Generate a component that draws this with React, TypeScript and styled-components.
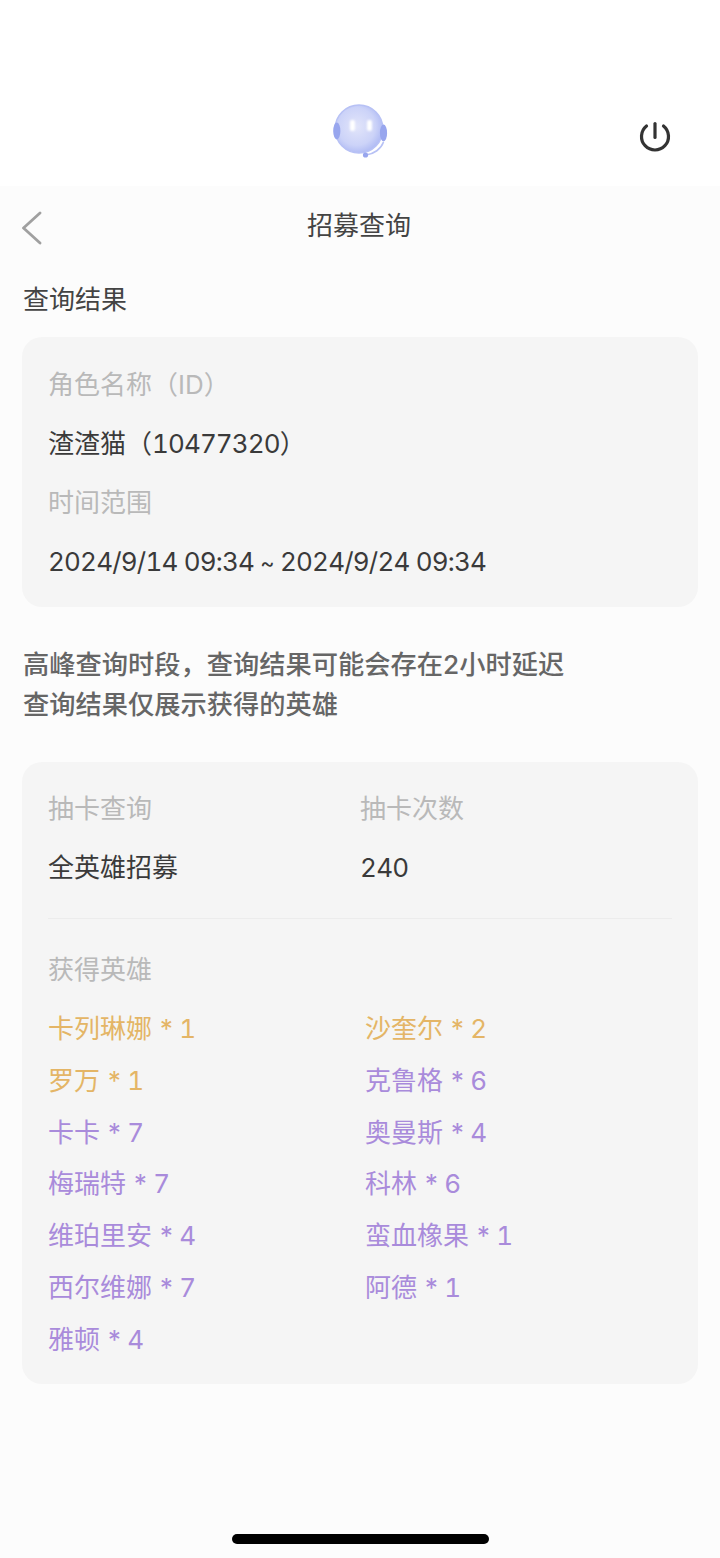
import React from "react";
import styled, { createGlobalStyle } from "styled-components";

const Global = createGlobalStyle`
  html, body { margin: 0; padding: 0; background: #fcfcfc; }
  * { box-sizing: border-box; }
  body {
    font-family: Inter, "Noto Sans CJK SC", sans-serif;
  }
`;

const Page = styled.div`
  width: 720px;
  height: 1558px;
  display: flex;
  flex-direction: column;
  overflow: hidden;
  background: #fcfcfc;
`;

const TopBar = styled.header`
  height: 186px;
  background: #fff;
  display: grid;
  grid-template-columns: 1fr 60px 1fr;
  padding-top: 102px;
  align-items: start;
`;

const Logo = styled.div`
  grid-column: 2;
  display: flex;
  justify-content: center;
`;

const Power = styled.div`
  justify-self: end;
  margin: 16px 49px 0 0;
  display: flex;
`;

const NavBar = styled.div`
  height: 80px;
  display: grid;
  grid-template-columns: 1fr auto 1fr;
  align-items: center;
  padding: 0 24px 0 22px;
`;

const Title = styled.div`
  font-size: 26px;
  line-height: 36px;
  margin-top: -1px;
  color: #444;
`;

const Back = styled.div`
  display: flex;
  margin-top: 4px;
`;

const Content = styled.main`
  padding: 0 22px;
  display: flex;
  flex-direction: column;
`;

const SectionTitle = styled.div`
  font-size: 26px;
  line-height: 36px;
  color: #444;
  margin-top: 16px;
  margin-bottom: 19px;
  padding-left: 1px;
`;

const Card = styled.section`
  background: #f5f5f5;
  border-radius: 20px;
  padding: 30px 26px;
`;

const InfoCard = styled(Card)`
  height: 270px;
  display: flex;
  flex-direction: column;
  gap: 23px;
`;

const Label = styled.div`
  font-size: 26px;
  line-height: 36px;
  color: #b9b9b9;
`;

const Value = styled.div`
  font-size: 26px;
  line-height: 36px;
  color: #3a3a3a;
`;

const Num = styled.span<{ $squeeze: number }>`
  font-feature-settings: "tnum" 1;
  letter-spacing: ${(p) => p.$squeeze}px;
`;

const Tilde = styled.span`
  font-size: 22px;
`;

const Note = styled.p`
  margin: 38px 0 37px;
  padding-left: 1px;
  font-size: 26.25px;
  line-height: 40px;
  color: #666;
  font-weight: 500;
`;

const ResultCard = styled(Card)`
  height: 622px;
  padding-top: 29px;
`;

const TwoCols = styled.div`
  display: grid;
  grid-template-columns: 312px 1fr;
  row-gap: 23px;
`;

const Divider = styled.div`
  height: 1px;
  background: #ececec;
  margin: 32px 0 33px;
`;

const HeroGrid = styled.div`
  display: grid;
  grid-template-columns: 317px 1fr;
  grid-auto-rows: 51.8px;
  margin-top: 23px;
`;

const Hero = styled.div<{ $tone: "gold" | "purple" }>`
  font-size: 26px;
  line-height: 36px;
  word-spacing: 0.5px;
  color: ${(p) => (p.$tone === "gold" ? "#e4b566" : "#a98bdb")};
`;

const HomeBar = styled.div`
  position: absolute;
  left: 232px;
  top: 1534px;
  width: 257px;
  height: 10px;
  border-radius: 5px;
  background: #000;
`;

const heroes: [string, string, "gold" | "purple"][] = [
  ["卡列琳娜", " * 1", "gold"],
  ["沙奎尔", " * 2", "gold"],
  ["罗万", " * 1", "gold"],
  ["克鲁格", " * 6", "purple"],
  ["卡卡", " * 7", "purple"],
  ["奥曼斯", " * 4", "purple"],
  ["梅瑞特", " * 7", "purple"],
  ["科林", " * 6", "purple"],
  ["维珀里安", " * 4", "purple"],
  ["蛮血橡果", " * 1", "purple"],
  ["西尔维娜", " * 7", "purple"],
  ["阿德", " * 1", "purple"],
  ["雅顿", " * 4", "purple"],
];

export default function App() {
  return (
    <Page>
      <Global />
      <TopBar>
        <Logo>
          <svg width="60" height="60" viewBox="0 0 60 60">
            <defs>
              <radialGradient id="face" cx="45%" cy="45%" r="60%">
                <stop offset="0%" stopColor="#e2e5fa" />
                <stop offset="65%" stopColor="#ccd3f8" />
                <stop offset="100%" stopColor="#aab6f3" />
              </radialGradient>
              <filter id="soft" x="-40%" y="-40%" width="180%" height="180%">
                <feGaussianBlur stdDeviation="0.8" />
              </filter>
            </defs>
            <circle cx="29" cy="27" r="24" fill="url(#face)" stroke="#b7c1f5" strokeWidth="1.4" />
            <ellipse cx="6.8" cy="29" rx="3.6" ry="8.5" fill="#98a6ee" />
            <ellipse cx="53.5" cy="31" rx="3.6" ry="8.5" fill="#98a6ee" />
            <path d="M53.5 40 C51 47 44 52 36 53" fill="none" stroke="#b7c1f5" strokeWidth="1.6" />
            <circle cx="35.5" cy="53" r="2.6" fill="#98a6ee" />
            <g filter="url(#soft)">
              <rect x="20" y="18" width="5" height="11" rx="2" fill="#fff" />
              <rect x="37" y="18" width="5" height="11" rx="2" fill="#fff" />
            </g>
          </svg>
        </Logo>
        <Power>
          <svg width="32" height="34" viewBox="0 0 32 34" fill="none" stroke="#333" strokeWidth="3.2" strokeLinecap="round">
            <path d="M7.5 8 A13.5 13.5 0 1 0 24.5 8" />
            <path d="M16 5.5 V19.5" />
          </svg>
        </Power>
      </TopBar>
      <NavBar>
        <Back>
          <svg width="22" height="34" viewBox="0 0 22 34" fill="none" stroke="#a0a0a0" strokeWidth="2.8" strokeLinecap="round" strokeLinejoin="round">
            <path d="M18 2 L1.5 17 L18 32" />
          </svg>
        </Back>
        <Title>招募查询</Title>
      </NavBar>
      <Content>
        <SectionTitle>查询结果</SectionTitle>
        <InfoCard>
          <Label>角色名称（ID）</Label>
          <Value>
            渣渣猫（<Num $squeeze={-0.9}>10477320</Num>）
          </Value>
          <Label>时间范围</Label>
          <Value>
            <Num $squeeze={-0.8}>
              2024/9/14 09:34 <Tilde>~</Tilde> 2024/9/24 09:34
            </Num>
          </Value>
        </InfoCard>
        <Note>
          高峰查询时段，查询结果可能会存在2小时延迟
          <br />
          查询结果仅展示获得的英雄
        </Note>
        <ResultCard>
          <TwoCols>
            <Label>抽卡查询</Label>
            <Label>抽卡次数</Label>
            <Value>全英雄招募</Value>
            <Value>
              <Num $squeeze={-0.7}>240</Num>
            </Value>
          </TwoCols>
          <Divider />
          <Label>获得英雄</Label>
          <HeroGrid>
            {heroes.map(([name, count, tone]) => (
              <Hero key={name} $tone={tone}>
                {name}
                <Num $squeeze={-1.5}>{count}</Num>
              </Hero>
            ))}
          </HeroGrid>
        </ResultCard>
      </Content>
      <HomeBar />
    </Page>
  );
}
